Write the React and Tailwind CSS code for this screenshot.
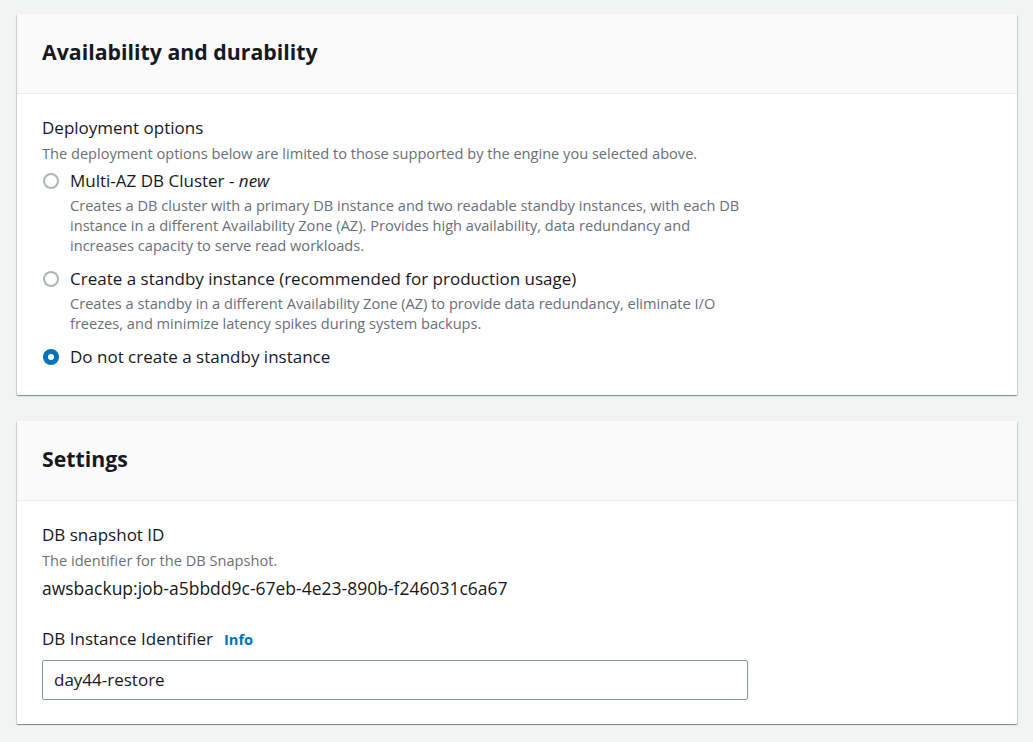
function Radio({ checked }) {
  return (
    <span
      className={
        'mt-[6px] ml-[1px] box-border block h-4 w-4 shrink-0 rounded-full bg-white ' +
        (checked ? 'border-[5px] border-[#0073bb]' : 'border-2 border-[#aab7b8]')
      }
    />
  )
}

function Option({ checked, label, desc }) {
  return (
    <div className="flex gap-[11px]">
      <Radio checked={checked} />
      <div>
        <div className="text-[17px] leading-[28px] text-[#16191f]">{label}</div>
        {desc && <p className="max-w-[675px] text-[14.6px] leading-[20px] text-[#687078]">{desc}</p>}
      </div>
    </div>
  )
}

function Card({ title, children }) {
  return (
    <section className="rounded-[1px] bg-white shadow-[0_1px_1px_0_rgba(0,28,36,0.3),1px_1px_1px_0_rgba(0,28,36,0.15),-1px_1px_1px_0_rgba(0,28,36,0.15)]">
      <header className="flex h-[80px] items-center border-b border-[#eaeded] bg-[#fafafa] px-[25px] pb-[4px]">
        <h2 className="text-[21.3px] font-bold leading-[28px] text-[#16191f]">{title}</h2>
      </header>
      <div className="px-[25px] pb-[24px] pt-[20px]">{children}</div>
    </section>
  )
}

export default function App() {
  return (
    <div
      className="min-h-screen bg-[#f2f3f3] px-[17px] pt-[14px] pb-[17px]"
      style={{ fontFamily: '"Open Sans", "Noto Sans", Arial, sans-serif' }}
    >
      <div className="flex w-[1000px] flex-col gap-[26px]">
        <Card title="Availability and durability">
          <div className="text-[17px] leading-[28px] text-[#16191f]">Deployment options</div>
          <p className="mt-[1px] text-[14.6px] leading-[20px] text-[#687078]">
            The deployment options below are limited to those supported by the engine you selected above.
          </p>
          <div className="mt-[4px] flex flex-col gap-[10px]">
            <Option
              label={<>Multi-AZ DB Cluster - <i>new</i></>}
              desc="Creates a DB cluster with a primary DB instance and two readable standby instances, with each DB instance in a different Availability Zone (AZ). Provides high availability, data redundancy and increases capacity to serve read workloads."
            />
            <Option
              label="Create a standby instance (recommended for production usage)"
              desc="Creates a standby in a different Availability Zone (AZ) to provide data redundancy, eliminate I/O freezes, and minimize latency spikes during system backups."
            />
            <Option checked label="Do not create a standby instance" />
          </div>
        </Card>

        <Card title="Settings">
          <div className="text-[17px] leading-[28px] text-[#16191f]">DB snapshot ID</div>
          <p className="mt-[1px] text-[14.6px] leading-[20px] text-[#687078]">The identifier for the DB Snapshot.</p>
          <div className="mt-[4px] text-[17.5px] leading-[28px] text-[#16191f]">
            awsbackup:job-a5bbdd9c-67eb-4e23-890b-f246031c6a67
          </div>

          <div className="mt-[23px] flex items-baseline gap-[11px]">
            <span className="text-[17px] leading-[28px] text-[#16191f]">DB Instance Identifier</span>
            <a className="text-[14.6px] font-bold text-[#0073bb]">Info</a>
          </div>
          <div className="mt-[7px] flex h-[40px] w-[706px] items-center rounded-[2px] border border-[#879596] px-[11px] text-[17px] text-[#16191f]">
            day44-restore
          </div>
        </Card>
      </div>
    </div>
  )
}
